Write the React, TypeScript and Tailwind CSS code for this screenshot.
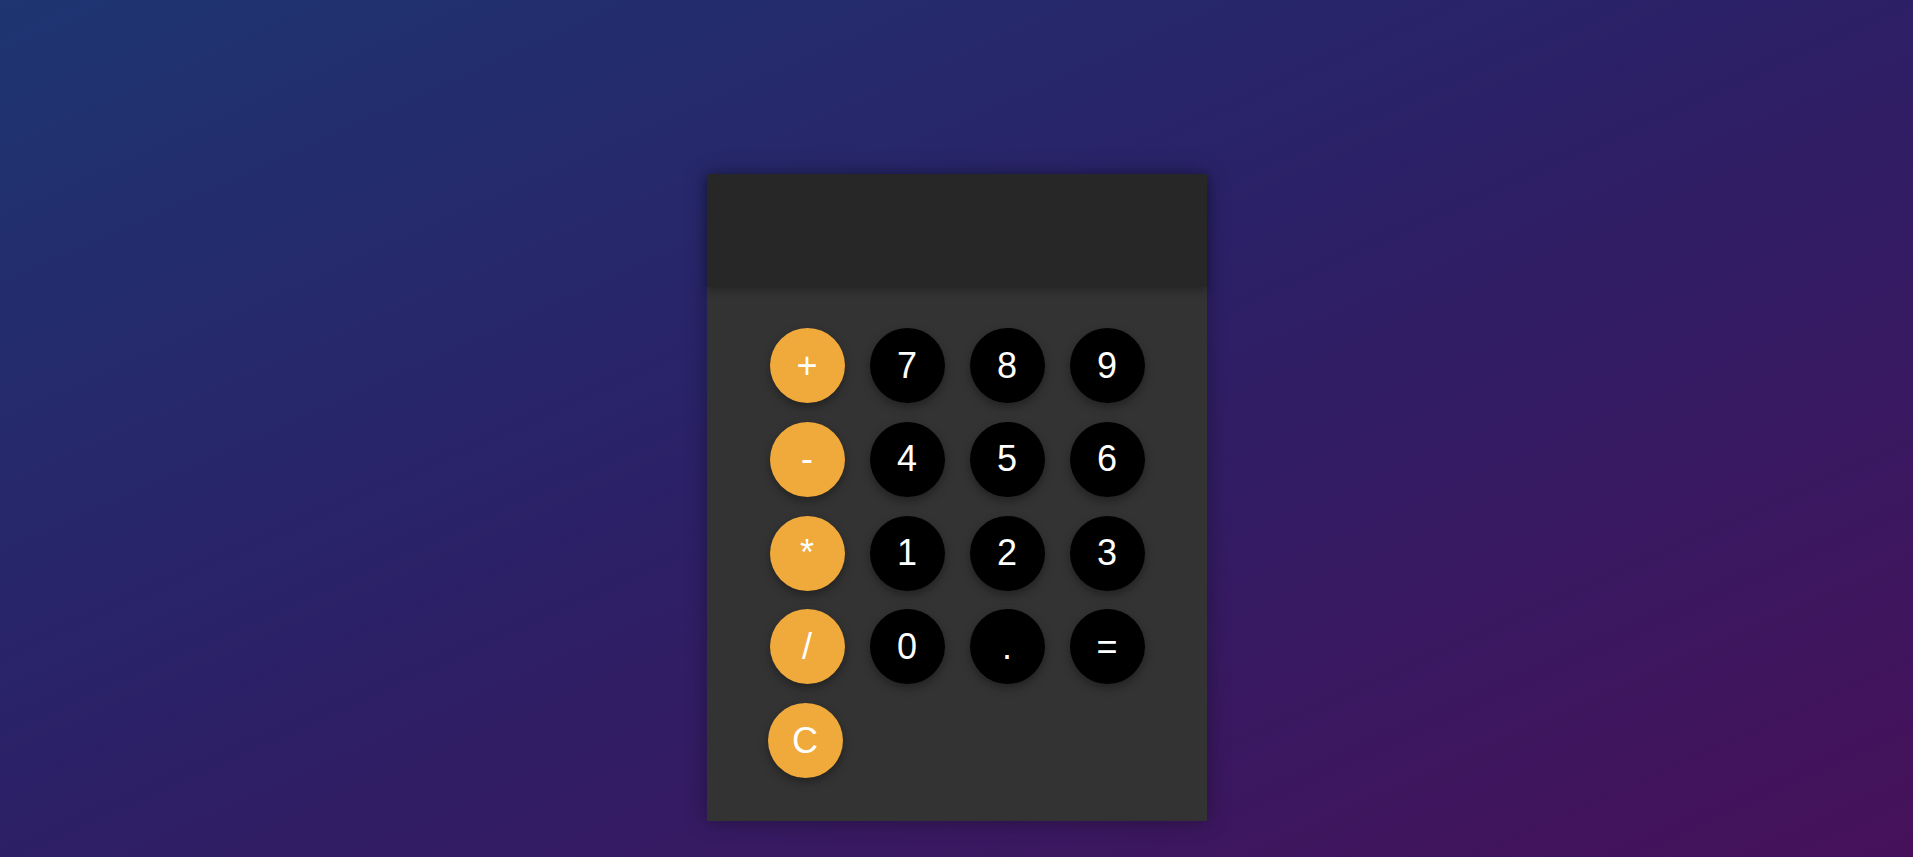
import React from "react";

const rows: { op: string; nums: string[] }[] = [
  { op: "+", nums: ["7", "8", "9"] },
  { op: "-", nums: ["4", "5", "6"] },
  { op: "*", nums: ["1", "2", "3"] },
  { op: "/", nums: ["0", ".", "="] },
];

function Key({ label, orange }: { label: string; orange?: boolean }) {
  return (
    <button
      className={
        "w-[75px] h-[75px] rounded-full flex items-center justify-center text-white text-[36px] leading-none shadow-[0_4px_10px_rgba(0,0,0,0.35)] " +
        (orange ? "bg-[#f0a93b]" : "bg-black")
      }
      style={{ fontFamily: '"Liberation Sans", Arial, sans-serif' }}
    >
      {label}
    </button>
  );
}

export default function App() {
  return (
    <div
      className="min-h-screen w-full bg-[linear-gradient(to_bottom_right,#1e3572,#2b2168_45%,#46115a)] flex justify-center"
      style={{ fontFamily: '"Liberation Sans", Arial, sans-serif' }}
    >
      <div className="mt-[174px] w-[500px] h-[647px] bg-[#333333] shadow-[0_0_20px_rgba(0,0,0,0.35)] flex flex-col">
        <div className="h-[113px] bg-[#272727] shadow-[0_3px_8px_rgba(0,0,0,0.3)] relative z-10" />
        <div className="flex flex-col items-center pt-[41px] pl-[1px]">
          <div className="grid grid-cols-[75px_75px_75px_75px] gap-x-[25px] gap-y-[18.75px]">
            {rows.map((r) => (
              <React.Fragment key={r.op}>
                <Key label={r.op} orange />
                {r.nums.map((n) => (
                  <Key key={n} label={n} />
                ))}
              </React.Fragment>
            ))}
            <div className="-ml-[2px]">
              <Key label="C" orange />
            </div>
          </div>
        </div>
      </div>
    </div>
  );
}
